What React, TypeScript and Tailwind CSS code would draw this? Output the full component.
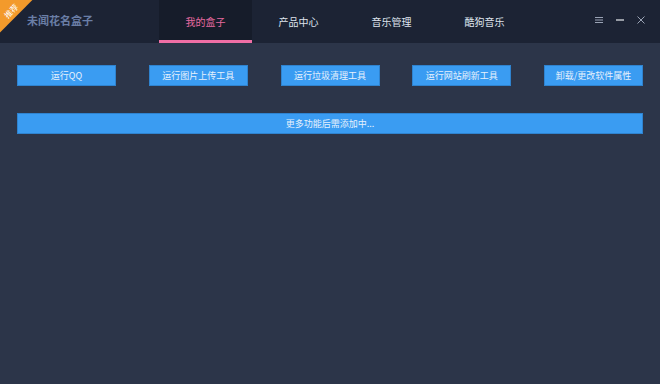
import React, { useState } from 'react';

const tabs = ['我的盒子', '产品中心', '音乐管理', '酷狗音乐'];
const tools = ['运行QQ', '运行图片上传工具', '运行垃圾清理工具', '运行网站刷新工具', '卸载/更改软件属性'];

const App = () => {
  const [active, setActive] = useState(0);

  return (
    <div
      className="w-[660px] h-[384px] flex flex-col bg-[#2c3549] overflow-hidden"
      style={{ fontFamily: '"Noto Sans CJK SC", "Liberation Sans", sans-serif' }}
    >
      {/* 顶部栏 */}
      <div className="relative h-[43px] flex bg-[#1c2334] shrink-0">
        <div className="absolute top-0 left-0 w-[40px] h-[40px] overflow-hidden">
          <div className="absolute top-[-6px] left-[-23px] w-[60px] h-[26px] bg-[#f39a2b] -rotate-45 flex items-center justify-center pt-[11px] text-white text-[8px] leading-none">
            推荐
          </div>
        </div>
        <div className="w-[159px] flex items-center pl-[27px] pb-[3px] text-[11px] font-bold text-[#6a7ea6]">
          未闻花名盒子
        </div>
        <div className="flex">
          {tabs.map((t, i) => (
            <button
              key={t}
              onClick={() => setActive(i)}
              className={
                i === active
                  ? 'w-[93px] flex items-center justify-center text-[10px] text-[#e86aa0] bg-[#161c2a] border-b-[3px] border-[#f06ea5] pt-[3px]'
                  : 'w-[93px] flex items-center justify-center text-[10px] text-[#dfe4ee] border-b-[3px] border-transparent pt-[3px]'
              }
            >
              {t}
            </button>
          ))}
        </div>
        <div className="ml-auto flex items-center gap-[11px] pr-[14px] pb-[3px] text-[#9aa3b5]">
          <svg width="10" height="10" viewBox="0 0 10 10">
            <path d="M1 2.5h8M1 5h8M1 7.5h8" stroke="#9aa3b5" strokeWidth="1" />
          </svg>
          <svg width="10" height="10" viewBox="0 0 10 10">
            <path d="M1 5h8" stroke="#e8ebf1" strokeWidth="1.2" />
          </svg>
          <svg width="10" height="10" viewBox="0 0 10 10">
            <path d="M1.5 1.5l7 7M8.5 1.5l-7 7" stroke="#9aa3b5" strokeWidth="1" />
          </svg>
        </div>
      </div>

      {/* 内容 */}
      <div className="px-[17px] pt-[22px] flex flex-col">
        <div className="flex justify-between">
          {tools.map((t) => (
            <button
              key={t}
              className="w-[99px] h-[21px] bg-[#3a9cf2] border border-[#2f83cf] text-[#e6f1fd] text-[9px] flex items-center justify-center"
            >
              {t}
            </button>
          ))}
        </div>
        <button className="mt-[27px] w-full h-[21px] bg-[#3a9cf2] border border-[#2f83cf] text-[#e6f1fd] text-[9px] flex items-center justify-center">
          更多功能后需添加中...
        </button>
      </div>
    </div>
  );
};

export default App;
